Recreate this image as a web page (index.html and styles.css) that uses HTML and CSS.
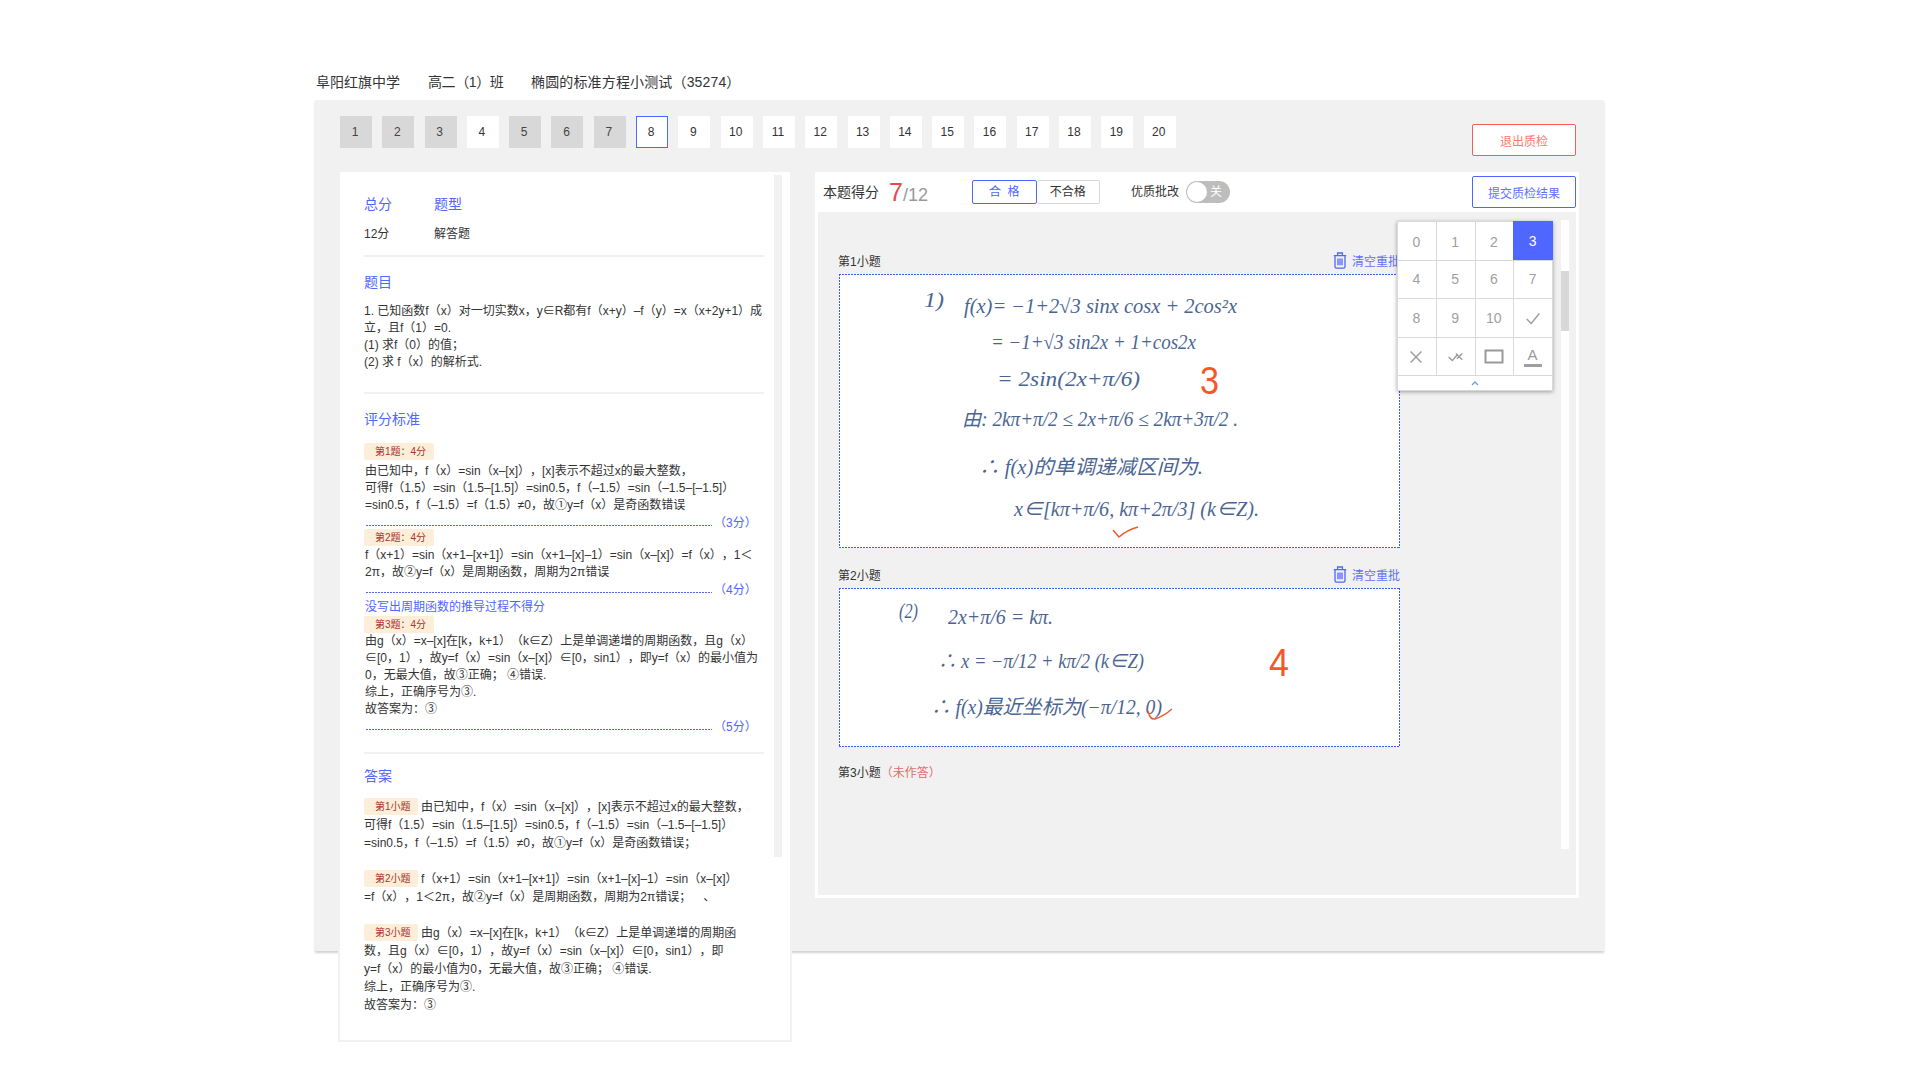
FILE: index.html
```html
<!DOCTYPE html>
<html lang="zh-CN">
<head>
<meta charset="utf-8">
<title>质检</title>
<link rel="stylesheet" href="styles.css">
</head>
<body>
<div class="page">
  <div class="crumbs"><span>阜阳红旗中学</span><span class="crumb-class">高二（1）班</span><span class="crumb-test">椭圆的标准方程小测试（35274）</span></div>
  <div class="panel">
    <div class="toprow">
      <div class="tiles">
        <a class="tile done">1</a><a class="tile done">2</a><a class="tile done">3</a><a class="tile">4</a><a class="tile done">5</a><a class="tile done">6</a><a class="tile done">7</a><a class="tile cur">8</a><a class="tile">9</a><a class="tile">10</a><a class="tile">11</a><a class="tile">12</a><a class="tile">13</a><a class="tile">14</a><a class="tile">15</a><a class="tile">16</a><a class="tile">17</a><a class="tile">18</a><a class="tile">19</a><a class="tile">20</a>
      </div>
      <button class="btn btn-exit">退出质检</button>
    </div>
    <div class="columns">
      <aside class="left">
        <div class="left-track"></div>
        <div class="meta">
          <div class="h">总分</div><div class="h">题型</div>
          <div>12分</div><div>解答题</div>
        </div>
        <hr class="rule rule-a">
        <h3 class="h sec sec-q">题目</h3>
        <p class="body-text q-text">1. 已知函数f（x）对一切实数x，y∈R都有f（x+y）–f（y）=x（x+2y+1）成<br>立，且f（1）=0.<br>(1) 求f（0）的值；<br>(2) 求 f（x）的解析式.</p>
        <hr class="rule rule-b">
        <h3 class="h sec sec-c">评分标准</h3>
        <div class="badge b-first">第1题：4分</div>
        <p class="body-text crit crit-first">由已知中，f（x）=sin（x–[x]），[x]表示不超过x的最大整数，<br>可得f（1.5）=sin（1.5–[1.5]）=sin0.5，f（–1.5）=sin（–1.5–[–1.5]）<br>=sin0.5，f（–1.5）=f（1.5）≠0，故①y=f（x）是奇函数错误</p>
        <div class="points"><i></i><span>（3分）</span></div>
        <div class="badge">第2题：4分</div>
        <p class="body-text crit">f（x+1）=sin（x+1–[x+1]）=sin（x+1–[x]–1）=sin（x–[x]）=f（x），1＜<br>2π，故②y=f（x）是周期函数，周期为2π错误</p>
        <div class="points"><i></i><span>（4分）</span></div>
        <p class="note">没写出周期函数的推导过程不得分</p>
        <div class="badge">第3题：4分</div>
        <p class="body-text crit crit-third">由g（x）=x–[x]在[k，k+1）（k∈Z）上是单调递增的周期函数，且g（x）<br>∈[0，1），故y=f（x）=sin（x–[x]）∈[0，sin1），即y=f（x）的最小值为<br>0，无最大值，故③正确； ④错误.<br>综上，正确序号为③.<br>故答案为：③</p>
        <div class="points"><i></i><span>（5分）</span></div>
        <hr class="rule rule-c">
        <h3 class="h sec sec-a">答案</h3>
        <p class="answer"><span class="badge badge-in">第1小题</span>由已知中，f（x）=sin（x–[x]），[x]表示不超过x的最大整数，<br>可得f（1.5）=sin（1.5–[1.5]）=sin0.5，f（–1.5）=sin（–1.5–[–1.5]）<br>=sin0.5，f（–1.5）=f（1.5）≠0，故①y=f（x）是奇函数错误；</p>
        <p class="answer"><span class="badge badge-in">第2小题</span>f（x+1）=sin（x+1–[x+1]）=sin（x+1–[x]–1）=sin（x–[x]）<br>=f（x），1＜2π，故②y=f（x）是周期函数，周期为2π错误；　、</p>
        <p class="answer"><span class="badge badge-in">第3小题</span>由g（x）=x–[x]在[k，k+1）（k∈Z）上是单调递增的周期函<br>数，且g（x）∈[0，1），故y=f（x）=sin（x–[x]）∈[0，sin1），即<br>y=f（x）的最小值为0，无最大值，故③正确； ④错误.<br>综上，正确序号为③.<br>故答案为：③</p>
      </aside>
      <section class="right">
        <div class="scorebar">
          <span class="score-label">本题得分</span>
          <span class="score"><b>7</b><em>/12</em></span>
          <div class="seg"><span class="seg-on">合&nbsp;&nbsp;格</span><span class="seg-off">不合格</span></div>
          <span class="fine">优质批改</span>
          <span class="toggle"><i></i><span>关</span></span>
          <button class="btn btn-submit">提交质检结果</button>
        </div>
        <div class="sheet">
          <div class="sheet-track"><i></i></div>
          <div class="subhead">
            <span>第1小题</span>
            <span class="clear"><svg class="trash" viewBox="0 0 14 17"><path d="M.8 3.6h12.4M4.6 3.4V1h4.8v2.4M2 3.6v11.2a1.4 1.4 0 0 0 1.4 1.4h7.2a1.4 1.4 0 0 0 1.4-1.4V3.6M5 6.4v6.8M7 6.4v6.8M9 6.4v6.8"/></svg>清空重批</span>
          </div>
          <div class="work work-1">
            <svg class="hand" viewBox="0 0 559 272">
              <text x="84" y="32" textLength="20" lengthAdjust="spacingAndGlyphs">1)</text>
              <text x="124" y="38" textLength="273" lengthAdjust="spacingAndGlyphs">f(x)= −1+2√3 sinx cosx + 2cos²x</text>
              <text x="151" y="74" textLength="205" lengthAdjust="spacingAndGlyphs">= −1+√3 sin2x + 1+cos2x</text>
              <text x="157" y="111" textLength="143" lengthAdjust="spacingAndGlyphs">= 2sin(2x+π/6)</text>
              <text x="122" y="151" textLength="276" lengthAdjust="spacingAndGlyphs">由: 2kπ+π/2 ≤ 2x+π/6 ≤ 2kπ+3π/2 .</text>
              <text x="139" y="199" textLength="224" lengthAdjust="spacingAndGlyphs">∴ f(x)的单调递减区间为.</text>
              <text x="174" y="241" textLength="245" lengthAdjust="spacingAndGlyphs">x∈[kπ+π/6, kπ+2π/3] (k∈Z).</text>
              <text class="mark" x="360" y="119" textLength="19" lengthAdjust="spacingAndGlyphs">3</text>
              <path class="tick" d="M273 255 L279 262 Q287 255 298 252"/>
            </svg>
          </div>
          <div class="subhead subhead-2">
            <span>第2小题</span>
            <span class="clear"><svg class="trash" viewBox="0 0 14 17"><path d="M.8 3.6h12.4M4.6 3.4V1h4.8v2.4M2 3.6v11.2a1.4 1.4 0 0 0 1.4 1.4h7.2a1.4 1.4 0 0 0 1.4-1.4V3.6M5 6.4v6.8M7 6.4v6.8M9 6.4v6.8"/></svg>清空重批</span>
          </div>
          <div class="work work-2">
            <svg class="hand" viewBox="0 0 559 157">
              <text x="59" y="29" textLength="19" lengthAdjust="spacingAndGlyphs">(2)</text>
              <text x="108" y="35" textLength="105" lengthAdjust="spacingAndGlyphs">2x+π/6 = kπ.</text>
              <text x="98" y="79" textLength="206" lengthAdjust="spacingAndGlyphs">∴ x = −π/12 + kπ/2 (k∈Z)</text>
              <text x="91" y="125" textLength="231" lengthAdjust="spacingAndGlyphs">∴ f(x)最近坐标为(−π/12, 0)</text>
              <text class="mark" x="429" y="87" textLength="20" lengthAdjust="spacingAndGlyphs">4</text>
              <path class="tick" d="M308 122 Q310 131 315 130 Q324 127 332 120"/>
            </svg>
          </div>
          <div class="subhead subhead-3"><span>第3小题</span><span class="missing">（未作答）</span></div>
          <div class="pad">
            <div class="pad-grid">
              <span>0</span><span>1</span><span>2</span><span class="pad-on">3</span>
              <span>4</span><span>5</span><span>6</span><span>7</span>
              <span>8</span><span>9</span><span>10</span>
              <span><svg class="pad-ico" viewBox="0 0 20 20"><path d="M3 11l5 5L17 5"/></svg></span>
              <span><svg class="pad-ico" viewBox="0 0 20 20"><path d="M4 4l12 12M16 4L4 16"/></svg></span>
              <span><svg class="pad-ico" viewBox="0 0 20 20"><path d="M3 10l4 4 6-7M11 6l7 7M18 6l-6 6"/></svg></span>
              <span><svg class="pad-ico pad-box" viewBox="0 0 20 16"><rect x="1.5" y="1.5" width="17" height="12"/></svg></span>
              <span class="pad-a">A</span>
            </div>
            <div class="pad-foot"><svg class="chev" viewBox="0 0 8 5"><path d="M1 4l3-3 3 3"/></svg></div>
          </div>
        </div>
      </section>
    </div>
  </div>
</div>
</body>
</html>
```

FILE: styles.css
```css
* { box-sizing: border-box; }
html, body { margin: 0; padding: 0; background: #fff; }
body { font-family: "Liberation Sans", "Noto Sans CJK SC", sans-serif; font-size: 12px; color: #333; text-spacing-trim: space-all; min-height: 1080px; }
.page { width: 1289px; margin-left: 315px; }

.crumbs { height: 100px; padding: 74px 0 0 1px; display: flex; gap: 28px; font-size: 14px; line-height: 16px; color: #333; }
.crumb-class { width: 75px; white-space: nowrap; letter-spacing: -.4px; }
.crumb-test { letter-spacing: .15px; }

.panel { position: relative; height: 942px; padding: 16px 28px 0 25px; }
.panel::before { content: ""; position: absolute; left: 0; right: 0; top: 0; height: 851px; background: #f1f1f1; box-shadow: 0 2px 2px rgba(0,0,0,.18); }
.toprow { position: relative; display: flex; justify-content: space-between; align-items: flex-start; height: 56px; }
.tiles { display: flex; gap: 10.3px; }
.tile { width: 32px; height: 32px; padding-right: 2px; background: #fff; display: flex; align-items: center; justify-content: center; color: #333; font-size: 12px; }
.tile.done { background: #d8d8d8; color: #444; }
.tile.cur { border: 1px solid #4f66ff; }
.btn { width: 104px; height: 32px; padding: 0; background: #fff; border: 1px solid; border-radius: 2px; font: inherit; font-size: 12px; }
.btn-exit { margin-top: 8px; border-color: #f55c5c; color: #f77; }
.btn-submit { margin: 1px 0 0 auto; border-color: #4f66ff; color: #5f73ff; }

.columns { position: relative; display: flex; align-items: flex-start; }
.left { position: relative; flex: none; width: 454px; height: 872px; margin: -2px 0 0 -2px; background: #fff; border: 2px solid #f1f1f1; padding-left: 24px; }
.left-track { position: absolute; left: 434px; top: 3px; width: 8px; height: 682px; background: #f1f1f1; }
.h { color: #4f66ff; font-size: 14px; font-weight: normal; line-height: 16px; margin: 0; }
.meta { display: grid; grid-template-columns: 70px 1fr; row-gap: 14px; padding-top: 24px; line-height: 16px; }
.rule { width: 400px; height: 2px; margin: 0; border: 0; background: #f1f1f1; }
.rule-a { margin-top: 13px; }
.rule-b { margin-top: 21px; }
.rule-c { margin-top: 19px; }
.sec { margin-top: 17px; }
.sec-a { margin-top: 14px; }
.body-text { margin: 0; line-height: 17px; white-space: nowrap; color: #333; }
.q-text { margin-top: 13px; }
.badge { width: 70px; height: 17px; line-height: 17px; padding-left: 11px; background: #fdeed9; color: #a8322d; font-size: 10px; border-radius: 2px; }
.b-first { margin-top: 16px; }
.crit { margin-top: 1px; padding-left: 1px; }
.crit-first { margin-top: 3px; }
.crit-third { margin-top: 0; }
.points { display: flex; height: 15px; padding-left: 2px; color: #4f66ff; }
.points i { width: 346px; height: 1px; margin-top: 11px; background: linear-gradient(90deg, #4f66ff 2px, transparent 0) 0 0 / 3px 1px repeat-x; }
.points span { margin: 1.5px 0 0 2px; line-height: 14px; }
.note { margin: 3px 0 0 1px; line-height: 17px; color: #4f66ff; }
.answer { margin: 0 0 18px; line-height: 18px; white-space: nowrap; }
.sec-a + .answer { margin-top: 14px; }
.badge-in { display: inline-block; width: 54px; margin-right: 3px; vertical-align: top; margin-top: 0; }

.right { flex: none; width: 764px; height: 726px; margin-left: 23px; background: #fff; border: 3px solid #fff; display: flex; flex-direction: column; }
.scorebar { flex: none; height: 37px; display: flex; align-items: flex-start; padding-left: 5px; }
.score-label { margin-top: 9px; font-size: 14px; line-height: 16px; }
.score { width: 83px; margin-left: 10px; margin-top: 3px; line-height: 28px; color: #999; }
.score b { font-weight: normal; font-size: 25px; color: #e5484d; }
.score em { font-style: normal; font-size: 18px; }
.seg { display: flex; width: 128px; height: 24px; margin-top: 5px; line-height: 22px; text-align: center; }
.seg span { flex: 1; border: 1px solid #4f66ff; border-radius: 2px; color: #4f66ff; }
.seg .seg-off { border-color: #d8d8d8; border-left: 0; color: #333; }
.fine { margin: 9px 0 0 31px; line-height: 16px; }
.toggle { position: relative; width: 44px; height: 22px; margin: 6px 0 0 7px; border-radius: 11px; background: #bdbdbd; color: #fff; line-height: 22px; text-align: right; padding-right: 8px; }
.toggle i { position: absolute; left: 1px; top: 1px; width: 20px; height: 20px; border-radius: 50%; background: #fff; }

.sheet { position: relative; flex: 1; background: #f1f1f1; padding: 40px 0 0 20px; }
.sheet-track { position: absolute; left: 743px; top: 8px; width: 8px; height: 629px; background: #fff; }
.sheet-track i { display: block; width: 8px; height: 60px; margin-top: 51px; background: #d8d8d8; }
.subhead { display: flex; justify-content: space-between; align-items: center; width: 562px; height: 18px; margin-bottom: 4px; padding-bottom: 1px; color: #333; }
.subhead-2 { margin-top: 18px; }
.subhead-3 { margin-top: 16px; justify-content: flex-start; }
.missing { color: #e76a6a; }
.clear { display: flex; align-items: center; gap: 5px; color: #5f73ff; }
.trash { width: 14px; height: 17px; fill: none; stroke: #4f66ff; stroke-width: 1.3; }
.work { width: 561px; margin-left: 1px; padding: 1px; background-color: #fff; background-image: linear-gradient(90deg, #3f57ff 2px, transparent 0), linear-gradient(90deg, #3f57ff 2px, transparent 0), linear-gradient(#3f57ff 2px, transparent 0), linear-gradient(#3f57ff 2px, transparent 0); background-size: 3px 1px, 3px 1px, 1px 3px, 1px 3px; background-position: 0 0, 0 100%, 0 0, 100% 0; background-repeat: repeat-x, repeat-x, repeat-y, repeat-y; }
.work-1 { height: 274px; }
.work-2 { height: 159px; }
.hand { display: block; width: 100%; height: 100%; }
.hand text { font-family: "Liberation Serif", "Noto Sans CJK SC", serif; font-style: italic; font-size: 20px; fill: #4a6592; }
.hand .mark { font-family: "Liberation Sans", sans-serif; font-style: normal; font-size: 38px; fill: #f4582a; }
.tick { fill: none; stroke: #ef5a2d; stroke-width: 1.5; }

.pad { position: absolute; left: 579px; top: 9px; width: 156px; height: 170px; background: #fff; border: 1px solid #d8d8d8; box-shadow: 0 1px 4px rgba(0,0,0,.35); display: flex; flex-direction: column; }
.pad-grid { display: grid; grid-template-columns: repeat(4, 1fr); grid-auto-rows: 37.6px; gap: 1px; background: #d8d8d8; border-bottom: 1px solid #d8d8d8; }
.pad-grid span { background: #fff; display: flex; align-items: center; justify-content: center; padding-right: 1px; color: #a0a0a0; font-size: 14px; }
.pad-grid span:nth-child(-n+4) { padding-top: 2px; }
.pad-grid .pad-on { background: #4f66ff; color: #fff; margin: -1px -1px 0 -1px; }
.pad-ico { width: 18px; height: 18px; fill: none; stroke: #9a9a9a; stroke-width: 1.5; }
.pad-ico.pad-box { width: 20px; height: 16px; stroke-width: 2; }
.pad-grid .pad-a { position: relative; color: #9a9a9a; font-size: 15px; line-height: 15px; padding-bottom: 5px; }
.pad-a::after { content: ""; position: absolute; left: 10px; top: 26px; width: 18px; height: 3px; background: #a0a0a0; }
.pad-foot { flex: 1; display: flex; align-items: center; justify-content: center; }
.chev { width: 8px; height: 5px; fill: none; stroke: #6b9bf0; stroke-width: 1.3; }
```
